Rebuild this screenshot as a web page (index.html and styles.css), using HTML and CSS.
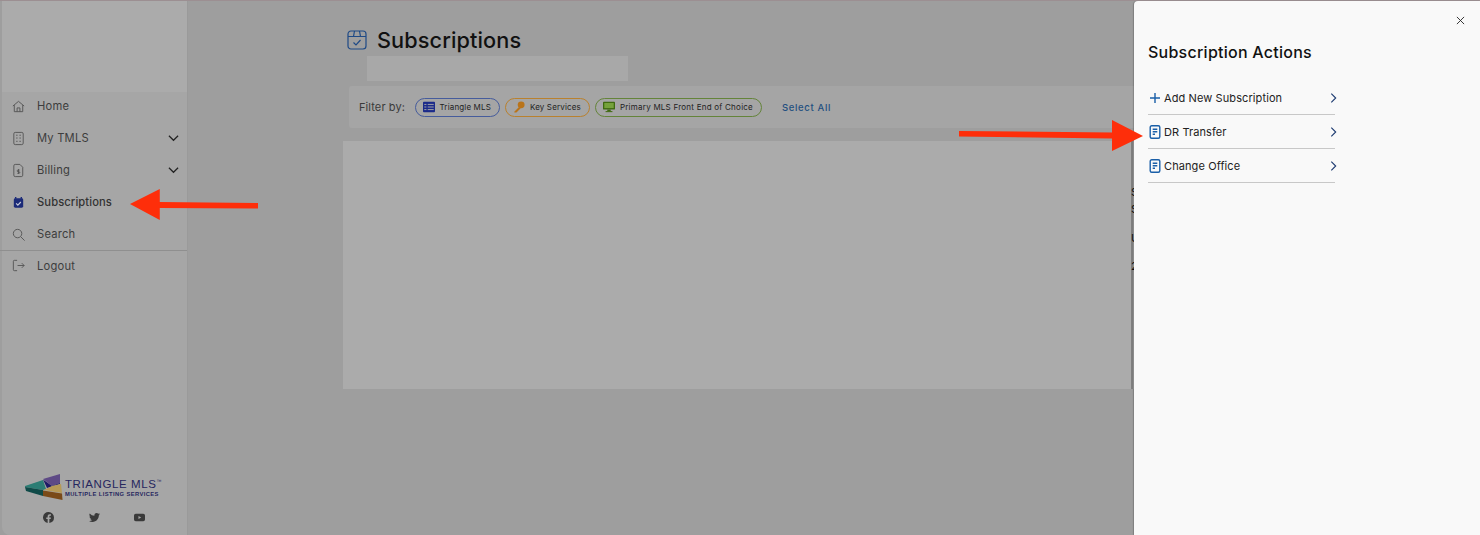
FILE: index.html
```html
<!DOCTYPE html>
<html lang="en">
<head>
<meta charset="utf-8">
<title>Subscriptions</title>
<link rel="stylesheet" href="styles.css">
</head>
<body>
<div class="app">
  <aside class="sidebar">
    <div class="side-top"></div>
    <nav class="nav">
      <a class="nav-item"><svg class="nav-icon" viewBox="0 0 16 16"><path d="M2 7.500 8 2.500l6 5M3.500 6.500V13.500h9V6.500M6.500 13.500V9.500h3v4"/></svg><span>Home</span></a>
      <a class="nav-item"><svg class="nav-icon" viewBox="0 0 16 16"><rect x="3" y="1.500" width="10" height="13" rx="1.500"/><path d="M5.500 4.500h1.500M9 4.500h1.500M5.500 7.500h1.500M9 7.500h1.500M5.500 11h1.500M9 11h1.500"/></svg><span>My TMLS</span><svg class="chev" viewBox="0 0 12 8"><path d="M1 1.500 6 6.500l5-5"/></svg></a>
      <a class="nav-item"><svg class="nav-icon" viewBox="0 0 16 16"><path d="M4.500 1.500h5l3 3v8.500a1.500 1.500 0 0 1-1.500 1.500H4.500A1.500 1.500 0 0 1 3 13V3a1.500 1.500 0 0 1 1.500-1.500Z"/><path d="M8 6.500v5M9.200 7.500H7.500a.8.800 0 0 0 0 1.800h1a.8.800 0 0 1 0 1.700H6.800"/></svg><span>Billing</span><svg class="chev" viewBox="0 0 12 8"><path d="M1 1.500 6 6.500l5-5"/></svg></a>
      <a class="nav-item active"><svg class="nav-icon solid" viewBox="0 0 16 16"><path d="M5 2v2M11 2v2" class="solid-line"/><rect x="3" y="3.500" width="10" height="10" rx="1.500" class="solid-fill"/><path d="M5.500 9 7.300 10.800 10.500 7.500" class="solid-check"/></svg><span>Subscriptions</span></a>
      <a class="nav-item"><svg class="nav-icon" viewBox="0 0 16 16"><circle cx="7" cy="7" r="4.500"/><path d="m10.500 10.500 4 4"/></svg><span>Search</span></a>
      <a class="nav-item logout"><svg class="nav-icon" viewBox="0 0 16 16"><path d="M6.500 2.500H3.500a1 1 0 0 0-1 1v9a1 1 0 0 0 1 1h3M7 8h7M11.500 5.500 14 8l-2.500 2.500"/></svg><span>Logout</span></a>
    </nav>
    <div class="side-foot">
      <div class="logo">
        <svg class="logo-mark" viewBox="0 0 38 28">
          <polygon points="0,13 18,7 21,16 18,17 0,14" fill="#2c7d74"/>
          <polygon points="0,14 18,17 18,23 1,18" fill="#0f4a48"/>
          <polygon points="18,6 35,1 35,10 27,13" fill="#5e4a86"/>
          <polygon points="18,6.500 27,13 35,10 35,11 22,15" fill="#1f1a66"/>
          <polygon points="19,17 27,13 36,11 37,20" fill="#b79a56"/>
          <polygon points="18,17.500 37,20.500 37.500,27 18,23" fill="#7a4a18"/>
        </svg>
        <div class="logo-text">
          <div class="logo-name">TRIANGLE MLS<sup>™</sup></div>
          <div class="logo-sub">MULTIPLE LISTING SERVICES</div>
        </div>
      </div>
      <div class="social">
        <svg viewBox="0 0 16 16"><path class="sf" d="M16 8a8 8 0 1 0-9.250 7.900V10.300H4.700V8h2.050V6.240c0-2 1.200-3.120 3.020-3.120.88 0 1.800.160 1.800.160v2h-1c-1 0-1.320.620-1.320 1.250V8h2.240l-.360 2.300H9.250v5.600A8 8 0 0 0 16 8Z"/></svg>
        <svg viewBox="0 0 16 16"><path class="sf" d="M5 14.500c6 0 9.300-5 9.300-9.300v-.4A6.700 6.700 0 0 0 16 3.100a6.500 6.500 0 0 1-1.900.5 3.300 3.300 0 0 0 1.400-1.800 6.600 6.600 0 0 1-2 .8 3.300 3.300 0 0 0-5.600 3A9.300 9.300 0 0 1 1.100 2.100a3.300 3.300 0 0 0 1 4.400 3.300 3.300 0 0 1-1.500-.4 3.300 3.300 0 0 0 2.600 3.200 3.300 3.300 0 0 1-1.500.1 3.300 3.300 0 0 0 3.100 2.300A6.600 6.600 0 0 1 0 13.100a9.300 9.300 0 0 0 5 1.400Z"/></svg>
        <svg viewBox="0 0 16 16"><path class="sf" fill-rule="evenodd" d="M2.500 2.500h11A2.500 2.500 0 0 1 16 5v6a2.500 2.500 0 0 1-2.500 2.500h-11A2.500 2.500 0 0 1 0 11V5a2.500 2.500 0 0 1 2.500-2.500ZM6.500 5.700v4.600L10.500 8Z"/></svg>
      </div>
    </div>
  </aside>

  <main class="main">
    <div class="page-head">
      <svg class="page-icon" viewBox="0 0 20 20"><rect x="1" y="1" width="18" height="18" rx="3"/><path d="M1 6.500h18M7.500 1l-1 5.500M12.500 1l1 5.500M6.500 12.500l2.500 2.500 4.500-5"/></svg>
      <h1>Subscriptions</h1>
    </div>
    <div class="blank-strip"></div>
    <div class="filter-bar">
      <span class="filter-label">Filter by:</span>
      <span class="chip chip-blue"><svg viewBox="0 0 14 12"><rect width="14" height="12" rx="1" fill="#1b2a8a"/><path d="M1.500 3h2.500M1.500 6h2.500M1.500 9h2.500M5.500 3h7M5.500 6h7M5.500 9h7" stroke="#a6a6a6" stroke-width="1.100"/></svg>Triangle MLS</span>
      <span class="chip chip-orange"><svg viewBox="0 0 14 14"><circle cx="9.500" cy="4.500" r="4" fill="#b9741b"/><path d="M7 7 1.500 12.500V13.500h2.500L9 8.500Z" fill="#b9741b"/></svg>Key Services</span>
      <span class="chip chip-green"><svg viewBox="0 0 14 12"><rect width="14" height="9" rx="1" fill="#3f6a10"/><rect x="1.500" y="1.300" width="11" height="6" fill="#76a23c"/><rect x="5" y="9" width="4" height="2" fill="#3f6a10"/><rect x="3" y="10.800" width="8" height="1.200" fill="#3f6a10"/></svg>Primary MLS Front End of Choice</span>
      <a class="select-all">Select All</a>
    </div>
    <section class="card">
      <div class="peek">
        <p class="peek-a">S</p>
        <p class="peek-b">S</p>
        <p class="peek-c">U</p>
        <p class="peek-d">2</p>
      </div>
    </section>
  </main>
</div>

<aside class="drawer">
  <button class="close" aria-label="Close"><svg viewBox="0 0 10 10"><path d="M1 1l8 8M9 1 1 9"/></svg></button>
  <h2>Subscription Actions</h2>
  <ul class="actions">
    <li class="action"><svg class="a-icon" viewBox="0 0 14 14"><path d="M7 2v10M2 7h10"/></svg><span>Add New Subscription</span><svg class="a-chev" viewBox="0 0 8 12"><path d="M1.500 1 6.500 6l-5 5"/></svg></li>
    <li class="action"><svg class="a-icon" viewBox="0 0 14 14"><rect x="2.200" y=".8" width="9.600" height="12.400" rx="1.500"/><path d="M4.700 4.300h4.600M4.700 6.800h4.600M4.700 9.300h2.300"/></svg><span>DR Transfer</span><svg class="a-chev" viewBox="0 0 8 12"><path d="M1.500 1 6.500 6l-5 5"/></svg></li>
    <li class="action"><svg class="a-icon" viewBox="0 0 14 14"><rect x="2.200" y=".8" width="9.600" height="12.400" rx="1.500"/><path d="M4.700 4.300h4.600M4.700 6.800h4.600M4.700 9.300h2.300"/></svg><span>Change Office</span><svg class="a-chev" viewBox="0 0 8 12"><path d="M1.500 1 6.500 6l-5 5"/></svg></li>
  </ul>
</aside>

<svg class="arrow arrow-left" viewBox="0 0 130 31"><polygon points="0,15 30,0 30,13 129,14 129,19.500 30,19 30,31" fill="#fe2e0a"/></svg>
<svg class="arrow arrow-right" viewBox="0 0 184 31"><polygon points="184,16 153,0 153,12.500 0,11 0,16.500 153,18.500 153,31" fill="#fe2e0a"/></svg>
</body>
</html>
```
FILE: styles.css
```css
* { box-sizing: border-box; }
html, body { margin: 0; padding: 0; height: 100%; }
body {
  position: relative;
  width: 1480px;
  height: 535px;
  overflow: hidden;
  background: #9e9e9e;
  font-family: "Inter", "Liberation Sans", sans-serif;
  color: #2c2c2c;
}
.app { display: flex; height: 535px; border-top: 1px solid #9c8f92; }
.sidebar {
  width: 186px;
  margin-left: 2px;
  flex: none;
  display: flex;
  flex-direction: column;
  background: #a6a6a6;
  border-right: 1px solid #9a9a9a;
  border-bottom-left-radius: 8px;
}
.side-top { height: 91px; background: #ababab; flex: none; }
.nav { display: flex; flex-direction: column; margin-top: -2px; }
.nav-item {
  height: 32px;
  display: flex;
  align-items: center;
  padding: 0 8px 0 9px;
  font-size: 11.200px;
  letter-spacing: .2px;
  color: #3d3d3d;
}
.nav-item span { margin-left: 11px; flex: 1; }
.nav-icon {
  width: 15px;
  height: 15px;
  fill: none;
  stroke: #555;
  stroke-width: 1;
  flex: none;
}
.chev { width: 11px; height: 8px; fill: none; stroke: #222; stroke-width: 1.300; flex: none; }
.active { font-weight: 500; color: #333; letter-spacing: .1px; }
.solid-line { stroke: #1b2a78; stroke-width: 1.500; }
.solid-fill { fill: #1b2a78; stroke: none; }
.solid-check { stroke: #c5c9d8; stroke-width: 1.300; }
.logout { border-top: 1px solid #8f8f8f; margin-left: -2px; padding: 0 8px 2px 11px; }
.side-foot { margin-top: auto; padding: 0 0 12px 23px; }
.logo { display: flex; align-items: flex-start; }
.logo-mark { width: 38px; height: 28px; flex: none; }
.logo-text { margin-left: 2px; padding-top: 5px; color: #26265e; }
.logo-name { font-family: "Liberation Sans", sans-serif; font-size: 11.500px; letter-spacing: .6px; line-height: 12px; white-space: nowrap; }
.logo-name sup { font-size: 5px; vertical-align: top; line-height: 6px; }
.logo-sub { font-family: "Liberation Sans", sans-serif; font-size: 5.800px; font-weight: 700; letter-spacing: .4px; line-height: 8px; white-space: nowrap; }
.social { display: flex; gap: 34.500px; margin: 11px 0 0 18px; }
.social svg { width: 11px; height: 11px; }
.sf { fill: #3a3a3a; }

.main { flex: 1; min-width: 0; padding: 25px 0 0 155px; overflow: hidden; }
.page-head { display: flex; align-items: center; padding: 0 0 2px 4px; height: 30px; }
.page-icon { width: 20px; height: 20px; fill: none; stroke: #1f4a86; stroke-width: 1.200; flex: none; }
h1 { margin: 0 0 0 10px; font-size: 21.700px; font-weight: 500; letter-spacing: 0.100px; color: #111; }
.blank-strip { width: 261px; height: 25px; margin: 0 0 5px 24px; background: #a8a8a8; }
.filter-bar {
  display: flex;
  align-items: center;
  width: 900px;
  height: 42px;
  margin-left: 6px;
  padding-left: 10px;
  background: #a5a5a5;
  border-radius: 3px;
}
.filter-label { font-size: 11px; letter-spacing: .1px; color: #3a3a3a; margin-right: 9.500px; }
.chip {
  display: inline-flex;
  align-items: center;
  height: 19px;
  padding: 0 8px 0 7px;
  margin-right: 5px;
  border: 1px solid;
  border-radius: 10px;
  font-size: 8px;
  letter-spacing: .15px;
  color: #222;
  white-space: nowrap;
}
.chip svg { width: 12px; height: 12px; margin-right: 5px; }
.chip-blue { border-color: #465c9c; }
.chip-orange { border-color: #b9812e; }
.chip-green { border-color: #64843a; letter-spacing: .24px; }
.select-all { margin-left: 15px; font-size: 9.500px; font-weight: 500; letter-spacing: .65px; color: #1f4f80; }
.card { width: 900px; height: 248px; margin-top: 13px; background: #ababab; }
.peek {
  width: 30px;
  height: 100%;
  margin-left: 788px;
  border-left: 2px solid #7f7f7f;
  font-size: 11px;
  line-height: 10px;
  color: #111;
}
.peek p { margin: 0 0 0 -2px; }
.peek-a { padding-top: 46px; }
.peek-b { padding-top: 7px; }
.peek-c { padding-top: 19px; }
.peek-d { padding-top: 18px; }

.drawer {
  position: absolute;
  top: 1px;
  right: 0;
  bottom: 0;
  width: 346px;
  padding: 0 14px;
  background: #f9f9f9;
  box-shadow: -1px 0 1px rgba(0, 0, 0, .2);
  border-radius: 4px 0 0 0;
}
.close { position: absolute; top: 15px; right: 15px; width: 9px; height: 9px; padding: 0; border: 0; background: none; display: flex; }
.close svg { width: 9px; height: 9px; fill: none; stroke: #222; stroke-width: 1; }
h2 { margin: 41px 0 19px; font-size: 16px; line-height: 20px; font-weight: 500; letter-spacing: .25px; color: #111; }
.actions { list-style: none; margin: 0; padding: 0; width: 187px; }
.action {
  display: flex;
  align-items: center;
  height: 34px;
  border-bottom: 1px solid #c8c8c8;
  font-size: 11px;
  letter-spacing: .1px;
  color: #222;
}
.a-icon { width: 14px; height: 14px; fill: none; stroke: #1a5fa8; stroke-width: 1.400; flex: none; }
.action span { margin-left: 2px; flex: 1; }
.a-chev { width: 7px; height: 12px; margin-right: -2px; fill: none; stroke: #1c3a70; stroke-width: 1.300; flex: none; }

.arrow { position: absolute; }
.arrow-left { left: 130px; top: 189px; width: 129px; height: 31px; }
.arrow-right { left: 959px; top: 120px; width: 184px; height: 31px; }
```
